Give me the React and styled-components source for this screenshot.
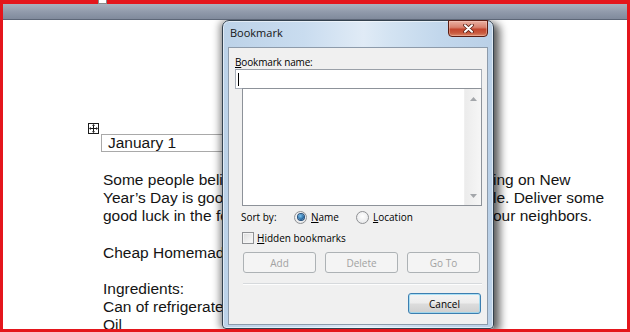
import React from "react";
import styled, { createGlobalStyle } from "styled-components";

const GlobalStyle = createGlobalStyle`
  html, body {
    margin: 0;
    padding: 0;
  }
  body {
    width: 630px;
    height: 332px;
    overflow: hidden;
  }
`;

const Screen = styled.div`
  width: 630px;
  height: 332px;
  box-sizing: border-box;
  padding: 0 3px 3px 3px;
  background: #e4161c;
  display: flex;
  flex-direction: column;
`;

const RulerStrip = styled.div`
  height: 4px;
  flex-shrink: 0;
  display: flex;
  padding-left: 95px;
`;

const IndentMarker = styled.div`
  width: 9px;
  height: 4px;
  box-sizing: border-box;
  background: #fff;
  border: 1px solid #8a8a8a;
  border-top: none;
`;

const ToolBand = styled.div`
  height: 16px;
  flex-shrink: 0;
  box-sizing: border-box;
  background: linear-gradient(#aab2bf, #9099aa 55%, #808a9c);
  border-bottom: 1px solid #5d6677;
`;

const Page = styled.div`
  flex: 1;
  position: relative;
  overflow: hidden;
  background: #fff;
  font-family: "Liberation Sans", Arial, sans-serif;
  font-size: 15.5px;
  color: #141414;
`;

const PageBody = styled.div`
  padding: 103px 0 0 85px;
`;

const MoveHandle = styled.div`
  width: 11px;
  height: 11px;
  box-sizing: border-box;
  border: 1px solid #1c1c1c;
  background: #fff;
  display: flex;
  align-items: center;
  justify-content: center;
`;

const DateCell = styled.div`
  margin-left: 13px;
  width: 380px;
  height: 18px;
  box-sizing: border-box;
  border: 1px solid #a9a9a9;
  border-right: none;
  padding-left: 6px;
  line-height: 16px;
`;

const TextBlock = styled.div`
  margin: 19px 0 0 15px;
  line-height: 18px;
  white-space: nowrap;
`;

const Para = styled.div`
  margin-bottom: ${(p) => (p.$last ? 0 : 18.5)}px;
`;

const Line = styled.div`
  height: 18px;
`;

const Covered = styled.span`
  display: inline-block;
  width: 390px;
  overflow: hidden;
  vertical-align: top;
`;

/* dialog */

const Dialog = styled.div`
  position: absolute;
  left: 219px;
  top: 0;
  width: 272px;
  box-sizing: border-box;
  border: 1px solid #34424f;
  border-radius: 7px 7px 4px 4px;
  padding: 0 5px 3px 5px;
  background: linear-gradient(
    90deg,
    #bcd2e8 0%,
    #c9dcef 30%,
    #e0ebf6 52%,
    #d3e3f2 62%,
    #c2d7ec 80%,
    #bad0e7 100%
  );
  box-shadow: inset 0 0 0 1px rgba(255, 255, 255, 0.55),
    -3px 0 7px rgba(0, 0, 0, 0.38), 6px 3px 8px rgba(0, 0, 0, 0.6);
  display: flex;
  flex-direction: column;
  font-family: "Open Sans", "Noto Sans", sans-serif;
  font-size: 10px;
  color: #000;
`;

const TitleBar = styled.div`
  height: 26px;
  display: flex;
  justify-content: space-between;
  align-items: flex-start;
`;

const Title = styled.div`
  padding: 5px 0 0 2px;
  font-size: 11px;
  line-height: 14px;
  color: #151515;
`;

const CloseButton = styled.div`
  width: 40px;
  height: 17px;
  margin-top: -1px;
  box-sizing: border-box;
  border: 1px solid #5a1c12;
  border-radius: 0 0 4px 4px;
  background: linear-gradient(#eab0a2 0%, #d8826f 42%, #c4462e 55%, #c95a3e 80%, #dc8a6c 100%);
  box-shadow: inset 0 0 0 1px rgba(255, 220, 210, 0.35);
  display: flex;
  align-items: center;
  justify-content: center;
`;

const Client = styled.div`
  flex: 1;
  background: #f0f0f0;
  border: 1px solid #8d9bab;
  padding: 7px 5px 10px 6px;
  display: flex;
  flex-direction: column;
`;

// accelerator key: first letter underlined, text stays one node
const Accel = styled.span`
  display: inline-block;
  letter-spacing: ${(p) => p.$tight ? "-0.15px" : "normal"};

  &::first-letter {
    text-decoration: underline;
  }
`;

const FieldLabel = styled.div`
  line-height: 14px;
`;

const NameBox = styled.div`
  height: 20px;
  box-sizing: border-box;
  border: 1px solid #a7aeb8;
  border-top-color: #9aa0a8;
  background: #fff;
  display: flex;
  align-items: center;
  padding-left: 2px;
`;

const Caret = styled.span`
  width: 1px;
  height: 13px;
  background: #000;
`;

const BookmarkList = styled.div`
  margin: -1px 0 0 7px;
  height: 118px;
  box-sizing: border-box;
  border: 1px solid #8d9299;
  background: #fff;
  display: flex;
`;

const ListArea = styled.div`
  flex: 1;
`;

const ScrollTrack = styled.div`
  width: 16px;
  background: linear-gradient(90deg, #ececec, #f6f6f6);
  border-left: 1px solid #f0f0f0;
  display: flex;
  flex-direction: column;
  justify-content: space-between;
  align-items: center;
  padding: 8px 0 7px;
`;

const SortRow = styled.div`
  margin: 4px 0 0 6px;
  height: 14px;
  display: flex;
  align-items: center;
`;

const SortCaption = styled.span`
  width: 53px;
`;

const RadioOption = styled.label`
  display: flex;
  align-items: center;
  gap: 4px;
  margin-right: 17px;
`;

const Radio = styled.span`
  width: 13px;
  height: 13px;
  box-sizing: border-box;
  border-radius: 50%;
  border: 1px solid #8f9194;
  background: radial-gradient(circle at 50% 40%, #ffffff, #e2e3e5);
  display: flex;
  align-items: center;
  justify-content: center;

  &::after {
    content: "";
    width: 6px;
    height: 6px;
    border-radius: 50%;
    display: ${(p) => (p.$checked ? "block" : "none")};
    background: radial-gradient(circle at 40% 35%, #7cc6f4, #1d5c95 70%);
    box-shadow: 0 0 0 1px #25507c;
  }
`;

const CheckRow = styled.div`
  margin: 7px 0 0 7px;
  height: 14px;
  display: flex;
  align-items: center;
  gap: 3px;
`;

const CheckBox = styled.span`
  width: 12px;
  height: 12px;
  box-sizing: border-box;
  border: 1px solid #8f9194;
  background: linear-gradient(135deg, #dcdcdc, #fbfbfb);
  box-shadow: inset 0 0 0 1px #f4f4f4;
`;

const ButtonRow = styled.div`
  margin: 7px 0 0 8px;
  display: flex;
  gap: 9px;
`;

const DialogButton = styled.div`
  width: 73px;
  height: 21px;
  box-sizing: border-box;
  border-radius: 3px;
  display: flex;
  align-items: center;
  justify-content: center;
  border: 1px solid ${(p) => (p.$default ? "#3c7eb0" : "#adb2b5")};
  color: ${(p) => (p.$default ? "#000" : "#a2a2a2")};
  background: ${(p) =>
    p.$default
      ? "linear-gradient(#f4f4f4 0%, #ececec 48%, #dcdcdc 52%, #cfcfcf 100%)"
      : "#f4f4f4"};
  box-shadow: ${(p) =>
    p.$default ? "inset 0 0 0 1px rgba(140, 215, 245, 0.7)" : "none"};
`;

const Separator = styled.div`
  margin: 10px 0 0 8px;
  height: 0;
  border-top: 1px solid #d6d9dc;
  border-bottom: 1px solid #fdfdfd;
`;

const Footer = styled.div`
  margin-top: 8px;
  padding-right: 1px;
  display: flex;
  justify-content: flex-end;
`;

const MoveIcon = () => (
  <svg width="9" height="9" viewBox="0 0 9 9">
    <path d="M4.5 1.5V7.5M1.5 4.5H7.5" stroke="#111" strokeWidth="1" />
    <polygon points="4.5,0 3,1.8 6,1.8" fill="#111" />
    <polygon points="4.5,9 3,7.2 6,7.2" fill="#111" />
    <polygon points="0,4.5 1.8,3 1.8,6" fill="#111" />
    <polygon points="9,4.5 7.2,3 7.2,6" fill="#111" />
  </svg>
);

const CloseGlyph = () => (
  <svg width="11" height="9" viewBox="0 0 11 9">
    <path d="M2 1.2L9 7.8M9 1.2L2 7.8" stroke="#5b2015" strokeWidth="3.6" strokeLinecap="round" />
    <path d="M2 1.2L9 7.8M9 1.2L2 7.8" stroke="#fff" strokeWidth="2" strokeLinecap="round" />
  </svg>
);

const ScrollArrow = ({ down }) => (
  <svg width="7" height="4" viewBox="0 0 7 4">
    <polygon points={down ? "0,0 7,0 3.5,4" : "0,4 7,4 3.5,0"} fill="#a3a6aa" />
  </svg>
);

export default function App() {
  return (
    <>
      <GlobalStyle />
      <Screen>
        <RulerStrip>
          <IndentMarker />
        </RulerStrip>
        <ToolBand />
        <Page>
          <PageBody>
            <MoveHandle>
              <MoveIcon />
            </MoveHandle>
            <DateCell>January 1</DateCell>
            <TextBlock>
              <Para>
                <Line>
                  <Covered>Some people believe that eating a sweet treat or danc</Covered>ing on New
                </Line>
                <Line>
                  <Covered>Year’s Day is good luck. This cinnamon bread is simp</Covered>le. Deliver some
                </Line>
                <Line>
                  <Covered>good luck in the form of warm cinnamon bread to y</Covered>our neighbors.
                </Line>
              </Para>
              <Para>
                <Line>Cheap Homemade Cinnamon Bread</Line>
              </Para>
              <Para $last>
                <Line>Ingredients:</Line>
                <Line>Can of refrigerated biscuits</Line>
                <Line>Oil</Line>
              </Para>
            </TextBlock>
          </PageBody>

          <Dialog>
            <TitleBar>
              <Title>Bookmark</Title>
              <CloseButton>
                <CloseGlyph />
              </CloseButton>
            </TitleBar>
            <Client>
              <FieldLabel>
                <Accel $tight>Bookmark name:</Accel>
              </FieldLabel>
              <NameBox>
                <Caret />
              </NameBox>
              <BookmarkList>
                <ListArea />
                <ScrollTrack>
                  <ScrollArrow />
                  <ScrollArrow down />
                </ScrollTrack>
              </BookmarkList>
              <SortRow>
                <SortCaption>Sort by:</SortCaption>
                <RadioOption>
                  <Radio $checked />
                  <Accel>Name</Accel>
                </RadioOption>
                <RadioOption>
                  <Radio />
                  <Accel>Location</Accel>
                </RadioOption>
              </SortRow>
              <CheckRow>
                <CheckBox />
                <Accel>Hidden bookmarks</Accel>
              </CheckRow>
              <ButtonRow>
                <DialogButton>Add</DialogButton>
                <DialogButton>Delete</DialogButton>
                <DialogButton>Go To</DialogButton>
              </ButtonRow>
              <Separator />
              <Footer>
                <DialogButton $default>Cancel</DialogButton>
              </Footer>
            </Client>
          </Dialog>
        </Page>
      </Screen>
    </>
  );
}
